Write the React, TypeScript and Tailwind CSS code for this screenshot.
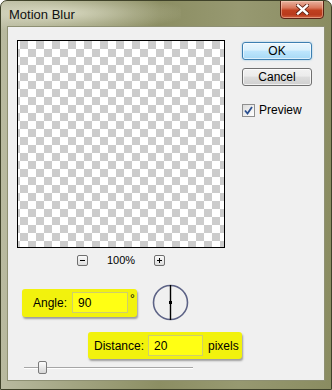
import React from "react";

export default function App() {
  return (
    <div className="w-[332px] h-[390px] relative overflow-hidden rounded-t-[7px] border border-[#3f4229] bg-[linear-gradient(90deg,#b9baa0_0%,#a3a582_22%,#8c8e63_48%,#979971_72%,#8a8c61_100%)] flex flex-col font-['Liberation_Sans',sans-serif] text-black select-none">
      {/* title glow */}
      <div className="absolute left-0 top-0 w-[180px] h-[30px] bg-[radial-gradient(ellipse_at_30%_40%,rgba(235,235,215,0.75)_0%,rgba(235,235,215,0.25)_45%,rgba(235,235,215,0)_75%)] pointer-events-none" />
      <div className="relative h-[25px] flex items-center pl-[8px] pt-[2px] text-[13px] text-[#111]">
        Motion Blur
      </div>
      {/* close button */}
      <div className="absolute right-[7px] top-[-1px] w-[44px] h-[19px] rounded-b-[4px] border border-[#5a2214] bg-[linear-gradient(180deg,#e9b3a0_0%,#d9785c_40%,#c0401f_55%,#b83a1c_80%,#d0603e_100%)] shadow-[inset_0_0_0_1px_rgba(255,220,200,0.45)] flex items-center justify-center">
        <svg width="13" height="11" viewBox="0 0 13 11">
          <path d="M2 1.5 L11 9.5 M11 1.5 L2 9.5" stroke="#5b2010" strokeWidth="4" strokeLinecap="square" />
          <path d="M2 1.5 L11 9.5 M11 1.5 L2 9.5" stroke="#ffffff" strokeWidth="2.4" strokeLinecap="square" />
        </svg>
      </div>

      {/* client */}
      <div className="relative mx-[6px] mb-[8px] flex-1 border border-[#8e9073] bg-[#f0f0f0] pl-[9px] pt-[13px] flex flex-col">
        <div className="flex">
          {/* preview */}
          <div className="flex flex-col items-center">
            <div className="w-[208px] h-[208px] border border-black bg-[conic-gradient(#cccccc_90deg,#ffffff_90deg_180deg,#cccccc_180deg_270deg,#ffffff_270deg)] bg-[length:16px_16px] bg-[position:-6px_0px]" />
            <div className="mt-[7px] flex items-center gap-[19px] h-[11px]">
              <div className="w-[11px] h-[11px] rounded-[2px] border border-[#6f6f6f] bg-[linear-gradient(180deg,#fafafa,#dcdcdc)] flex items-center justify-center">
                <svg width="9" height="9" viewBox="0 0 9 9">
                  <path d="M2 4.5 H7" stroke="#000" strokeWidth="1" />
                </svg>
              </div>
              <span className="text-[11px] leading-[11px]">100%</span>
              <div className="w-[11px] h-[11px] rounded-[2px] border border-[#6f6f6f] bg-[linear-gradient(180deg,#fafafa,#dcdcdc)] flex items-center justify-center">
                <svg width="9" height="9" viewBox="0 0 9 9">
                  <path d="M2 4.5 H7 M4.5 2 V7" stroke="#000" strokeWidth="1" />
                </svg>
              </div>
            </div>
          </div>

          {/* buttons */}
          <div className="ml-[17px] pt-[2px] flex flex-col">
            <div className="w-[70px] h-[18px] rounded-[3px] border border-[#3c7fb1] bg-[linear-gradient(180deg,#eaf6fd_0%,#d9f0fc_45%,#bee6fd_50%,#a7d9f5_100%)] shadow-[inset_0_0_0_1px_rgba(255,255,255,0.6),0_0_2px_rgba(60,160,220,0.6)] flex items-center justify-center text-[12px]">
              OK
            </div>
            <div className="mt-[8px] w-[70px] h-[18px] rounded-[3px] border border-[#707070] bg-[linear-gradient(180deg,#f2f2f2_0%,#ebebeb_45%,#dddddd_50%,#cfcfcf_100%)] shadow-[inset_0_0_0_1px_rgba(255,255,255,0.7)] flex items-center justify-center text-[12px]">
              Cancel
            </div>
            <div className="mt-[18px] flex items-center gap-[4px] h-[13px]">
              <div className="w-[13px] h-[13px] border border-[#8f8f8f] bg-[linear-gradient(135deg,#dcdcdc,#ffffff)] flex items-center justify-center">
                <svg width="11" height="11" viewBox="0 0 11 11">
                  <path d="M2 5.5 L4.5 8.5 L9 2" stroke="#2a4f8f" strokeWidth="1.8" fill="none" />
                </svg>
              </div>
              <span className="text-[12px] leading-[13px]">Preview</span>
            </div>
          </div>
        </div>

        {/* angle row */}
        <div className="mt-[18px] ml-[5px] flex items-center h-[37px]">
          <div className="w-[115px] h-[28px] rounded-[3px] bg-[#f2f20d] shadow-[1px_2px_2px_rgba(0,0,0,0.35)] flex items-center pl-[11px]">
            <span className="text-[12px] w-[39px]">Angle:</span>
            <div className="w-[56px] h-[21px] border border-[#cfcf6c] bg-[#ffff14] flex items-center pl-[5px] text-[12px]">
              90
            </div>
            <span className="ml-[2px] self-start mt-[4px] text-[12px] leading-[12px]">°</span>
          </div>
          <svg className="ml-[15px]" width="37" height="37" viewBox="0 0 37 37">
            <circle cx="18.5" cy="18.5" r="17" fill="none" stroke="#5d6386" strokeWidth="1.6" />
            <path d="M18.5 1 V36" stroke="#000" strokeWidth="1.4" />
            <rect x="17" y="17" width="3" height="3" fill="#000" />
          </svg>
        </div>

        {/* distance row */}
        <div className="mt-[11px] ml-[71px] flex">
          <div className="w-[154px] h-[27px] rounded-[3px] bg-[#f2f20d] shadow-[1px_2px_2px_rgba(0,0,0,0.35)] flex items-center pl-[6px]">
            <span className="text-[12px] w-[54px]">Distance:</span>
            <div className="w-[55px] h-[21px] border border-[#cfcf6c] bg-[#ffff14] flex items-center pl-[5px] text-[12px]">
              20
            </div>
            <span className="ml-[5px] text-[12px]">pixels</span>
          </div>
        </div>

        {/* slider */}
        <div className="mt-[2px] ml-[7px] relative w-[169px] h-[13px] flex items-center">
          <div className="w-full h-[2px] border-t border-[#a6a6a6] border-b border-b-[#ffffff] bg-[#d8d8d8]" />
          <div className="absolute left-[14px] top-0 w-[9px] h-[13px] rounded-[2px] border border-[#7a7a7a] bg-[linear-gradient(180deg,#fdfdfd,#d6d6d6)]" />
        </div>
      </div>
    </div>
  );
}
